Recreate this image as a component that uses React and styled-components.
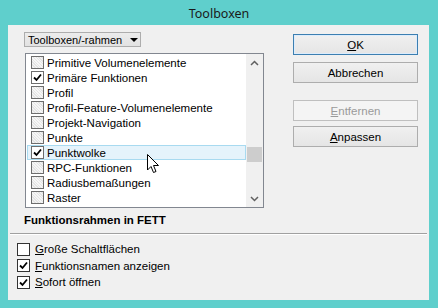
import React from 'react';
import styled, { createGlobalStyle } from 'styled-components';

const Global = createGlobalStyle`
    html, body {
        margin: 0;
        padding: 0;
        background: #5fcfcc;
    }
    body {
        font-family: "Liberation Sans", Arial, sans-serif;
        font-size: 11.5px;
        color: #000;
    }
`;

const Window = styled.div`
    width: 438px;
    height: 308px;
    background: #5fcfcc;
    display: flex;
    flex-direction: column;
    box-sizing: border-box;
    position: relative;
    overflow: hidden;
`;

const TitleBar = styled.div`
    height: 25px;
    display: flex;
    align-items: center;
    justify-content: center;
    font-family: "Noto Sans", "Liberation Sans", sans-serif;
    font-size: 12.5px;
    color: #1a1a1a;
    padding-top: 1px;
    box-sizing: border-box;
`;

const Panel = styled.div`
    margin: 0 9px 8px 8px;
    flex: 1;
    background: #f0f0f0;
    display: flex;
    flex-direction: column;
`;

const TopArea = styled.div`
    display: flex;
`;

const LeftCol = styled.div`
    display: flex;
    flex-direction: column;
    padding: 7px 0 0 16px;
`;

const Dropdown = styled.div`
    width: 117px;
    height: 15px;
    box-sizing: border-box;
    border: 1px solid #adadad;
    background: linear-gradient(#ececec, #e2e2e2);
    display: flex;
    align-items: center;
    padding-left: 3px;
    gap: 8px;
    font-size: 11px;
    white-space: nowrap;
    overflow: hidden;
`;

const Caret = styled.span`
    flex: none;
    width: 0;
    height: 0;
    border-left: 4px solid transparent;
    border-right: 4px solid transparent;
    border-top: 4px solid #000;
`;

const ListBox = styled.div`
    margin: 6px 0 0 1px;
    width: 239px;
    height: 155px;
    box-sizing: border-box;
    border: 1px solid #828790;
    background: #fff;
    display: flex;
`;

const Rows = styled.div`
    flex: 1;
    padding: 1px 0 0 1px;
    display: flex;
    flex-direction: column;
`;

const Row = styled.div`
    height: 15px;
    box-sizing: border-box;
    display: flex;
    align-items: center;
    padding-left: ${p => (p.$hot ? 3 : 4)}px;
    gap: 3px;
    background: ${p => (p.$hot ? '#e5f3fb' : 'transparent')};
    border: ${p => (p.$hot ? '1px solid #a8daf0' : 'none')};
    white-space: nowrap;
`;

const Box = styled.span`
    width: 13px;
    height: 13px;
    box-sizing: border-box;
    border: 1px solid ${p => (p.$soft ? '#6d6d6d' : '#333')};
    background: ${p =>
        p.$soft && !p.$on
            ? 'repeating-linear-gradient(45deg, #e4e4e4 0 1px, #f6f6f6 1px 2px)'
            : '#fff'};
    display: inline-flex;
    align-items: center;
    justify-content: center;
    flex: none;
`;

const ScrollBar = styled.div`
    width: 17px;
    background: #f0f0f0;
    display: flex;
    flex-direction: column;
    align-items: center;
`;

const Arrow = styled.div`
    height: 17px;
    display: flex;
    align-items: center;
    justify-content: center;
`;

const Track = styled.div`
    flex: 1;
    width: 100%;
    display: flex;
    flex-direction: column;
    align-items: center;
`;

const Thumb = styled.div`
    width: 15px;
    height: 15px;
    background: #cdcdcd;
    margin-top: ${p => p.$top}px;
`;

const BoldLabel = styled.div`
    margin: 4px 0 0 0;
    font-weight: bold;
    height: 16px;
    display: flex;
    align-items: center;
`;

const RightCol = styled.div`
    margin-left: auto;
    padding: 9px 11px 0 0;
    display: flex;
    flex-direction: column;
`;

const Button = styled.div`
    width: 125px;
    height: 21px;
    box-sizing: border-box;
    border: 1px solid ${p => (p.$default ? '#3c7fb1' : p.$disabled ? '#bfbfbf' : '#adadad')};
    background: ${p => (p.$disabled ? '#f4f4f4' : 'linear-gradient(#f0f0f0, #e5e5e5)')};
    color: ${p => (p.$disabled ? '#9a9a9a' : '#000')};
    box-shadow: ${p => (p.$default ? 'inset 0 0 0 1px #dcecfc' : 'none')};
    display: flex;
    align-items: center;
    justify-content: center;
    margin-top: ${p => p.$gap}px;
`;

const Separator = styled.div`
    margin: 5px 2px 0 2px;
    height: 1px;
    background: #a0a0a0;
    border-bottom: 1px solid #fff;
`;

const Options = styled.div`
    padding: 6px 0 0 9px;
    display: flex;
    flex-direction: column;
`;

const Option = styled.div`
    height: 16.5px;
    display: flex;
    align-items: center;
    gap: 5px;
`;

const Cursor = styled.svg`
    position: absolute;
    left: 147px;
    top: 154px;
`;

const Check = () => (
    <svg width="9" height="9" viewBox="0 0 9 9">
        <path d="M1 4.5 L3.5 7 L8 1.5" fill="none" stroke="#000" strokeWidth="1.8" />
    </svg>
);

const items = [
    ['Primitive Volumenelemente', false],
    ['Primäre Funktionen', true],
    ['Profil', false],
    ['Profil-Feature-Volumenelemente', false],
    ['Projekt-Navigation', false],
    ['Punkte', false],
    ['Punktwolke', true],
    ['RPC-Funktionen', false],
    ['Radiusbemaßungen', false],
    ['Raster', false],
];

const App = () => {
    return (
        <Window>
            <Global />
            <TitleBar>Toolboxen</TitleBar>
            <Panel>
                <TopArea>
                    <LeftCol>
                        <Dropdown>
                            <span>Toolboxen/-rahmen</span>
                            <Caret />
                        </Dropdown>
                        <ListBox>
                            <Rows>
                                {items.map(([name, on], i) => (
                                    <Row key={name} $hot={i === 6}>
                                        <Box $soft $on={on}>{on && <Check />}</Box>
                                        {name}
                                    </Row>
                                ))}
                            </Rows>
                            <ScrollBar>
                                <Arrow>
                                    <svg width="9" height="6" viewBox="0 0 9 6">
                                        <path d="M1 5 L4.5 1.5 L8 5" fill="none" stroke="#606060" strokeWidth="1.5" />
                                    </svg>
                                </Arrow>
                                <Track>
                                    <Thumb $top={76} />
                                </Track>
                                <Arrow>
                                    <svg width="9" height="6" viewBox="0 0 9 6">
                                        <path d="M1 1 L4.5 4.5 L8 1" fill="none" stroke="#606060" strokeWidth="1.5" />
                                    </svg>
                                </Arrow>
                            </ScrollBar>
                        </ListBox>
                        <BoldLabel>Funktionsrahmen in FETT</BoldLabel>
                    </LeftCol>
                    <RightCol>
                        <Button $default $gap={0}><u>O</u>K</Button>
                        <Button $gap={7}>Abbrechen</Button>
                        <Button $disabled $gap={17}><u>E</u>ntfernen</Button>
                        <Button $gap={5}><u>A</u>npassen</Button>
                    </RightCol>
                </TopArea>
                <Separator />
                <Options>
                    <Option>
                        <Box />
                        <span><u>G</u>roße Schaltflächen</span>
                    </Option>
                    <Option>
                        <Box><Check /></Box>
                        <span><u>F</u>unktionsnamen anzeigen</span>
                    </Option>
                    <Option>
                        <Box><Check /></Box>
                        <span><u>S</u>ofort öffnen</span>
                    </Option>
                </Options>
            </Panel>
            <Cursor width="13" height="20" viewBox="0 0 13 20">
                <path d="M0.5 0.5 L0.5 16 L4 12.5 L6.5 18.5 L9 17.5 L6.5 11.5 L11.5 11.5 Z" fill="#fff" stroke="#000" strokeWidth="1" />
            </Cursor>
        </Window>
    );
};

export default App;
